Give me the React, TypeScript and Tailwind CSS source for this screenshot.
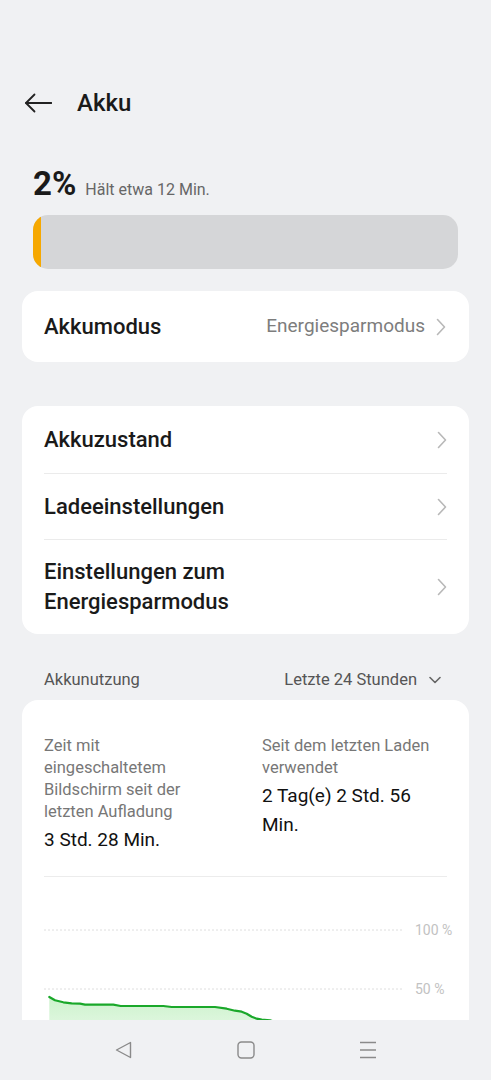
import React from "react";

const Chevron = () => (
  <svg width="10" height="18" viewBox="0 0 10 18" fill="none" className="shrink-0">
    <path d="M1.5 1.5L8.5 9L1.5 16.5" stroke="#b8b8b8" strokeWidth="1.6" strokeLinecap="round" strokeLinejoin="round" />
  </svg>
);

const linePts: [number, number][] = [
  [27.3, 120], [33, 123.3], [41.3, 125.3], [49.7, 126.3], [58, 126.7], [63, 127.7], [91.3, 127.7], [98.7, 129],
  [141.3, 129], [149.7, 130], [193, 130], [204.7, 131.7], [213, 133.7], [219.7, 134.7], [224.7, 136.7],
  [229.7, 139.7], [234.7, 141.7], [239.7, 142.7], [248, 143.3], [256, 146], [262, 152], [275, 158],
];

export default function App() {
  const d = linePts.map((p, i) => `${i === 0 ? "M" : "L"}${p[0]} ${p[1]}`).join(" ");
  const fillD = `${d} L275 200 L27.3 200 Z`;
  return (
    <div className="w-[491px] h-[1080px] bg-[#f0f1f3] flex flex-col font-['Roboto',sans-serif] text-[#1c1c1c]">
      <div className="h-[1020px] overflow-hidden flex flex-col">
        {/* Header */}
        <div className="mt-[83px] h-[40px] flex items-center pl-[24px] shrink-0">
          <svg width="28" height="20" viewBox="0 0 28 20" fill="none">
            <path d="M27.5 10H2" stroke="#222" strokeWidth="1.8" strokeLinecap="round" />
            <path d="M10.5 1.5L2 10L10.5 18.5" stroke="#222" strokeWidth="1.8" strokeLinecap="round" strokeLinejoin="round" />
          </svg>
          <span className="ml-[25px] text-[24px] font-medium leading-[40px] text-[#1a1a1a]">Akku</span>
        </div>

        {/* Percentage */}
        <div className="mt-[44px] flex items-baseline pl-[33px] shrink-0">
          <span className="text-[33px] font-bold leading-[33px] text-[#1a1a1a]">2%</span>
          <span className="ml-[9px] text-[16px] text-[#666]">Hält etwa 12 Min.</span>
        </div>

        {/* Battery bar */}
        <div className="mt-[13px] mx-[33px] h-[54px] rounded-[15px] bg-[#d5d6d8] overflow-hidden flex shrink-0">
          <div className="w-[8px] h-full bg-[#f6a800]" />
        </div>

        {/* Card 1 */}
        <div className="mt-[22px] mx-[22px] h-[71px] bg-white rounded-[16px] flex items-center pl-[22px] pr-[23px] shrink-0">
          <span className="flex-1 text-[22px] font-medium text-[#1a1a1a]">Akkumodus</span>
          <span className="text-[19px] text-[#7d7d7d] mr-[11px]">Energiesparmodus</span>
          <Chevron />
        </div>

        {/* Card 2 */}
        <div className="mt-[44px] mx-[22px] bg-white rounded-[16px] px-[22px] shrink-0">
          <div className="h-[68px] flex items-center border-b border-[#ebebeb]">
            <span className="flex-1 text-[22px] font-medium text-[#1a1a1a]">Akkuzustand</span>
            <Chevron />
          </div>
          <div className="h-[66px] flex items-center border-b border-[#ebebeb]">
            <span className="flex-1 text-[22px] font-medium text-[#1a1a1a]">Ladeeinstellungen</span>
            <Chevron />
          </div>
          <div className="py-[17px] flex items-center">
            <span className="flex-1 text-[22px] font-medium leading-[30px] text-[#1a1a1a]">
              Einstellungen zum
              <br />
              Energiesparmodus
            </span>
            <Chevron />
          </div>
        </div>

        {/* Section header */}
        <div className="mx-[22px] px-[22px] pt-[36px] pb-[10px] flex items-center shrink-0">
          <span className="flex-1 text-[16.5px] leading-[20px] text-[#555]">Akkunutzung</span>
          <span className="text-[16.5px] leading-[20px] text-[#555]">Letzte 24 Stunden</span>
          <svg width="12" height="8" viewBox="0 0 12 8" fill="none" className="ml-[12px] mr-[6px]">
            <path d="M1 1.5L6 6.5L11 1.5" stroke="#666" strokeWidth="1.6" strokeLinecap="round" strokeLinejoin="round" />
          </svg>
        </div>

        {/* Card 3 */}
        <div className="mx-[22px] bg-white rounded-[16px] shrink-0">
          <div className="px-[22px] pt-[35px]">
            <div className="flex">
              <div className="w-[218px] shrink-0">
                <div className="w-[165px] text-[16.5px] leading-[22px] text-[#777]">
                  Zeit mit eingeschaltetem Bildschirm seit der letzten Aufladung
                </div>
                <div className="mt-[2px] text-[19px] leading-[29px] text-[#111]">3 Std. 28 Min.</div>
              </div>
              <div className="w-[180px]">
                <div className="text-[16.5px] leading-[22px] text-[#777]">Seit dem letzten Laden verwendet</div>
                <div className="mt-[2px] w-[170px] text-[19px] leading-[29px] text-[#111]">
                  2 Tag(e) 2 Std. 56 Min.
                </div>
              </div>
            </div>
            <div className="mt-[22px] h-px bg-[#ececec]" />
          </div>
          <svg width="447" height="200" viewBox="0 0 447 200" className="block">
            <defs>
              <linearGradient id="g" x1="0" y1="0" x2="0" y2="1">
                <stop offset="0%" stopColor="#cdf2cd" />
                <stop offset="100%" stopColor="#ffffff" />
              </linearGradient>
            </defs>
            <line x1="22" y1="53" x2="380" y2="53" stroke="#dedede" strokeWidth="1" strokeDasharray="2 2" />
            <line x1="22" y1="112" x2="380" y2="112" stroke="#dedede" strokeWidth="1" strokeDasharray="2 2" />
            <text x="393" y="58" fontSize="14" fill="#c2c2c2" fontFamily="Roboto, sans-serif">100 %</text>
            <text x="393" y="117" fontSize="14" fill="#c2c2c2" fontFamily="Roboto, sans-serif">50 %</text>
            <path d={fillD} fill="url(#g)" />
            <path d={d} fill="none" stroke="#1aa82a" strokeWidth="2.2" strokeLinejoin="round" strokeLinecap="round" />
          </svg>
        </div>
      </div>

      {/* Nav bar */}
      <div className="h-[60px] flex justify-center items-center">
        <div className="w-[122px] flex justify-center">
          <svg width="17" height="18" viewBox="0 0 17 18" fill="none">
            <path d="M1.5 9L15.5 1.5V16.5Z" stroke="#8a8a8a" strokeWidth="1.4" strokeLinejoin="round" />
          </svg>
        </div>
        <div className="w-[122px] flex justify-center">
          <svg width="18" height="18" viewBox="0 0 18 18" fill="none">
            <rect x="1" y="1" width="16" height="16" rx="3.5" stroke="#8a8a8a" strokeWidth="1.4" />
          </svg>
        </div>
        <div className="w-[122px] flex justify-center">
          <svg width="18" height="18" viewBox="0 0 18 18" fill="none">
            <path d="M1 1.5H17M1 9H17M1 16.5H17" stroke="#8a8a8a" strokeWidth="1.4" />
          </svg>
        </div>
      </div>
    </div>
  );
}
